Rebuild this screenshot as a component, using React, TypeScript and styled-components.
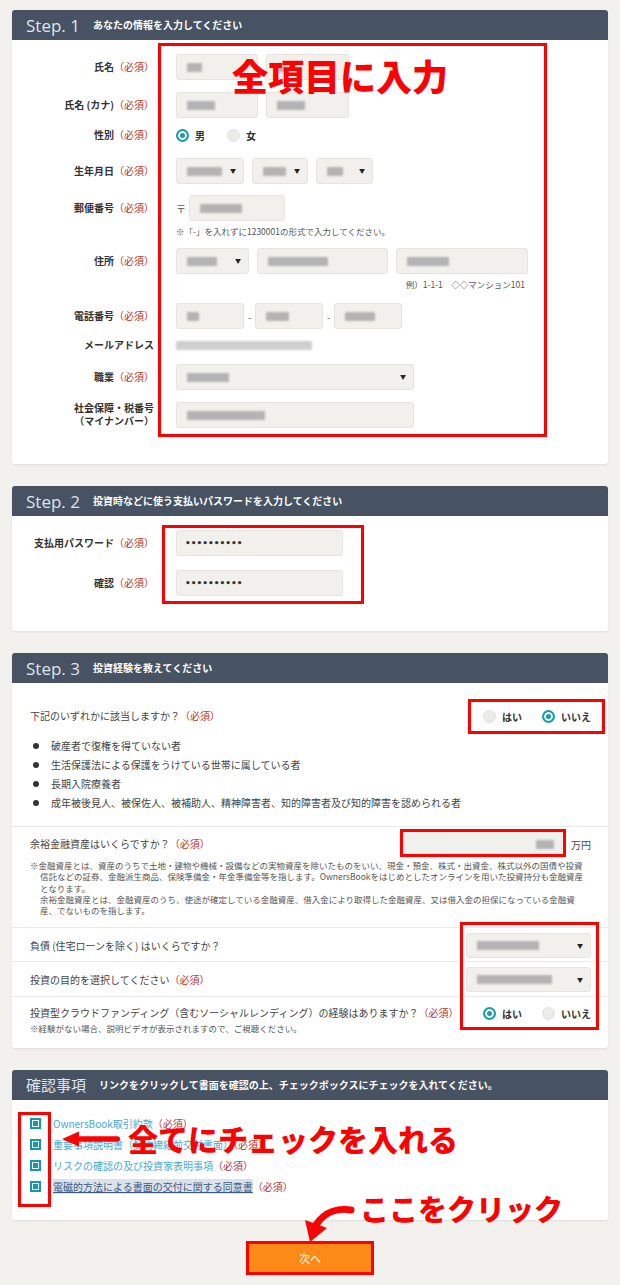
import React from 'react';
import styled, { createGlobalStyle } from 'styled-components';

const GlobalStyle = createGlobalStyle`
  html, body {
    margin: 0;
    padding: 0;
    background: #f2f1ed;
  }
  body {
    font-family: "Noto Sans CJK JP", "Noto Sans", sans-serif;
    color: #333;
  }
  * {
    box-sizing: border-box;
  }
`;

type BoxProps = { $x: number; $y: number; $w: number; $h: number };
type Field = { $gap?: number };

const Page = styled.div`
  position: relative;
  width: 620px;
  padding: 10px 12px 8px;
  display: flex;
  flex-direction: column;
  gap: 22px;
`;

const Card = styled.section`
  background: #fff;
  border-radius: 3px;
  box-shadow: 0 1px 2px rgba(0, 0, 0, 0.08);
`;

const CardHead = styled.header`
  height: 30px;
  background: #475263;
  border-radius: 3px 3px 0 0;
  display: flex;
  align-items: center;
  gap: 13px;
  padding: 0 14px;
`;

const StepNo = styled.span`
  font-family: "Open Sans", "Noto Sans CJK JP", sans-serif;
  font-size: 17px;
  color: #dfe5ec;
  line-height: 1;
`;

const HeadTitle = styled.span`
  font-size: 15px;
  color: #dfe5ec;
  line-height: 1;
`;

const HeadText = styled.span`
  font-size: 10px;
  font-weight: 700;
  color: #fff;
  line-height: 1;
`;

const FormBody = styled.div<{ $pt: number; $pb: number }>`
  padding: ${(p) => p.$pt}px 0 ${(p) => p.$pb}px;
  display: flex;
  flex-direction: column;
`;

const FieldRow = styled.div<Field>`
  display: flex;
  align-items: flex-start;
  margin-top: ${(p) => p.$gap ?? 0}px;
`;

const Label = styled.div<{ $h: number }>`
  width: 142px;
  height: ${(p) => p.$h}px;
  margin-right: 22px;
  flex-shrink: 0;
  display: flex;
  align-items: center;
  justify-content: flex-end;
  text-align: right;
  font-size: 10px;
  font-weight: 700;
  line-height: 13px;
  color: #333;
  padding-bottom: 2px;
`;

const Req = styled.span`
  color: #b8322c;
  font-weight: 400;
`;

const Content = styled.div`
  display: flex;
  flex-direction: column;
`;

const Controls = styled.div<{ $h: number; $gap?: number }>`
  display: flex;
  align-items: center;
  gap: ${(p) => p.$gap ?? 8}px;
  height: ${(p) => p.$h}px;
  font-size: 10px;
  font-weight: 700;
`;

const Input = styled.div<{ $w: number; $h?: number; $end?: boolean }>`
  width: ${(p) => p.$w}px;
  height: ${(p) => p.$h ?? 26}px;
  background: #f1f0ec;
  border: 1px solid #e6e4df;
  border-radius: 3px;
  display: flex;
  align-items: center;
  justify-content: ${(p) => (p.$end ? 'flex-end' : 'space-between')};
  padding: 0 7px 0 10px;
  flex-shrink: 0;
`;

const Blur = styled.span<{ $w: number; $light?: boolean }>`
  display: block;
  width: ${(p) => p.$w}px;
  height: 9px;
  background: ${(p) => (p.$light ? '#cfcfcf' : '#b3b3b3')};
  filter: blur(1.2px);
  border-radius: 1px;
`;

const Arrow = styled.span`
  font-size: 6px;
  color: #222;
  line-height: 1;
`;

const Dots = styled.span`
  font-family: "DejaVu Sans", sans-serif;
  font-size: 9px;
  color: #333;
  margin-left: -2px;
`;

const Dash = styled.span`
  width: 3px;
  text-align: center;
  font-weight: 400;
  color: #666;
`;

const PostMark = styled.span`
  width: 9px;
  font-weight: 400;
  color: #555;
`;

const Note = styled.div<{ $right?: boolean }>`
  font-size: 8.5px;
  line-height: 12px;
  color: #555;
  margin-top: 4px;
  text-align: ${(p) => (p.$right ? 'right' : 'left')};
  padding-right: ${(p) => (p.$right ? 3 : 0)}px;
`;

const Radio = styled.span<{ $on?: boolean }>`
  width: 13px;
  height: 13px;
  border-radius: 50%;
  flex-shrink: 0;
  background: ${(p) => (p.$on ? '#1a9cb0' : '#ebebe8')};
  border: ${(p) => (p.$on ? '2px solid #1a9cb0' : '1px solid #e3e3df')};
  box-shadow: ${(p) => (p.$on ? 'inset 0 0 0 2px #fff' : 'none')};
`;

const RadioGroup = styled.div<{ $gap: number }>`
  display: flex;
  align-items: center;
  gap: ${(p) => p.$gap}px;
  height: 14px;
  font-size: 10px;
  font-weight: 700;
  color: #333;
`;

const RadioItem = styled.label`
  display: flex;
  align-items: center;
  gap: 6px;
`;

const Section = styled.div<{ $pt: number; $pb: number; $line?: boolean }>`
  padding: ${(p) => p.$pt}px 17px ${(p) => p.$pb}px 18px;
  border-top: ${(p) => (p.$line ? '1px solid #ebeae7' : 'none')};
`;

const QRow = styled.div`
  display: flex;
  align-items: center;
  justify-content: space-between;
`;

const QText = styled.div`
  font-size: 10px;
  line-height: 14px;
  color: #444;
`;

const Bullets = styled.ul`
  list-style: none;
  margin: 13px 0 0;
  padding: 0;
`;

const Bullet = styled.li`
  display: flex;
  align-items: center;
  height: 19px;
  padding-left: 3px;
  font-size: 10px;
  color: #444;
  &::before {
    content: '';
    width: 6px;
    height: 6px;
    border-radius: 50%;
    background: #333;
    margin-right: 12px;
  }
`;

const Money = styled.div`
  display: flex;
  align-items: center;
  gap: 9px;
  font-size: 10px;
  color: #444;
`;

const SmallNote = styled.div<{ $mt: number }>`
  margin-top: ${(p) => p.$mt}px;
  font-size: 8.5px;
  line-height: 11.3px;
  color: #555;
  padding-left: 10px;
  text-indent: -10px;
  white-space: nowrap;
`;

const CheckList = styled.div`
  padding: 17px 18px 26px;
  display: flex;
  flex-direction: column;
  gap: 7px;
`;

const CheckRow = styled.div`
  display: flex;
  align-items: center;
  gap: 12px;
  height: 14px;
  font-size: 10px;
`;

const Check = styled.span`
  width: 11px;
  height: 11px;
  flex-shrink: 0;
  border: 2px solid #1797ad;
  background: #1797ad;
  box-shadow: inset 0 0 0 1px #fff;
`;

const DocLink = styled.a<{ $focus?: boolean }>`
  color: ${(p) => (p.$focus ? '#3b5a82' : '#46a9d6')};
  text-decoration: ${(p) => (p.$focus ? 'underline' : 'none')};
  background: ${(p) => (p.$focus ? '#dde2ea' : 'transparent')};
`;

const NextButton = styled.button`
  align-self: center;
  margin-top: -1px;
  width: 128px;
  height: 34px;
  background: #fb8b16;
  border: 3px solid #ff0000;
  color: #fff;
  font-family: "Noto Sans CJK JP", sans-serif;
  font-size: 11px;
  display: flex;
  align-items: center;
  justify-content: center;
`;

const RedBox = styled.div<BoxProps>`
  position: absolute;
  left: ${(p) => p.$x}px;
  top: ${(p) => p.$y}px;
  width: ${(p) => p.$w}px;
  height: ${(p) => p.$h}px;
  border: 3px solid #ff0000;
  pointer-events: none;
`;

const Callout = styled.div<{ $x: number; $y: number; $size: number }>`
  position: absolute;
  left: ${(p) => p.$x}px;
  top: ${(p) => p.$y}px;
  font-size: ${(p) => p.$size}px;
  line-height: 1;
  font-weight: 900;
  color: #ff0000;
  white-space: nowrap;
  pointer-events: none;
`;

const ArrowSvg = styled.svg<{ $x: number; $y: number }>`
  position: absolute;
  left: ${(p) => p.$x}px;
  top: ${(p) => p.$y}px;
  overflow: visible;
`;

const Select = ({ w, blur, h }: { w: number; blur: number; h?: number }) => (
  <Input $w={w} $h={h}>
    <Blur $w={blur} />
    <Arrow>▼</Arrow>
  </Input>
);

const App = () => {
  return (
    <>
      <GlobalStyle />
      <Page>
        <Card>
          <CardHead>
            <StepNo>Step. 1</StepNo>
            <HeadText>あなたの情報を入力してください</HeadText>
          </CardHead>
          <FormBody $pt={14} $pb={36}>
            <FieldRow>
              <Label $h={26}>
                氏名<Req>（必須）</Req>
              </Label>
              <Controls $h={26}>
                <Input $w={82}><Blur $w={15} /></Input>
                <Input $w={83}><Blur $w={9} /></Input>
              </Controls>
            </FieldRow>
            <FieldRow $gap={12}>
              <Label $h={26}>
                氏名 (カナ)<Req>（必須）</Req>
              </Label>
              <Controls $h={26}>
                <Input $w={82}><Blur $w={28} /></Input>
                <Input $w={83}><Blur $w={28} /></Input>
              </Controls>
            </FieldRow>
            <FieldRow $gap={10}>
              <Label $h={14}>
                性別<Req>（必須）</Req>
              </Label>
              <RadioGroup $gap={22}>
                <RadioItem><Radio $on />男</RadioItem>
                <RadioItem><Radio />女</RadioItem>
              </RadioGroup>
            </FieldRow>
            <FieldRow $gap={16}>
              <Label $h={26}>
                生年月日<Req>（必須）</Req>
              </Label>
              <Controls $h={26}>
                <Select w={68} blur={35} />
                <Select w={56} blur={23} />
                <Select w={57} blur={16} />
              </Controls>
            </FieldRow>
            <FieldRow $gap={11}>
              <Label $h={26}>
                郵便番号<Req>（必須）</Req>
              </Label>
              <Content>
                <Controls $h={26} $gap={4}>
                  <PostMark>〒</PostMark>
                  <Input $w={96}><Blur $w={42} /></Input>
                </Controls>
                <Note>※「-」を入れずに1230001の形式で入力してください。</Note>
              </Content>
            </FieldRow>
            <FieldRow $gap={11}>
              <Label $h={26}>
                住所<Req>（必須）</Req>
              </Label>
              <Content>
                <Controls $h={26}>
                  <Select w={73} blur={30} />
                  <Input $w={131}><Blur $w={60} /></Input>
                  <Input $w={132}><Blur $w={42} /></Input>
                </Controls>
                <Note $right>例）1-1-1　◇◇マンション101</Note>
              </Content>
            </FieldRow>
            <FieldRow $gap={13}>
              <Label $h={26}>
                電話番号<Req>（必須）</Req>
              </Label>
              <Controls $h={26} $gap={4}>
                <Input $w={68}><Blur $w={12} /></Input>
                <Dash>-</Dash>
                <Input $w={68}><Blur $w={23} /></Input>
                <Dash>-</Dash>
                <Input $w={68}><Blur $w={30} /></Input>
              </Controls>
            </FieldRow>
            <FieldRow $gap={9}>
              <Label $h={14}>メールアドレス</Label>
              <Controls $h={14}>
                <Blur $w={136} $light />
              </Controls>
            </FieldRow>
            <FieldRow $gap={12}>
              <Label $h={26}>
                職業<Req>（必須）</Req>
              </Label>
              <Controls $h={26}>
                <Select w={238} blur={42} />
              </Controls>
            </FieldRow>
            <FieldRow $gap={12}>
              <Label $h={26}>
                社会保障・税番号
                <br />
                （マイナンバー）
              </Label>
              <Controls $h={26}>
                <Input $w={238}><Blur $w={78} /></Input>
              </Controls>
            </FieldRow>
          </FormBody>
        </Card>

        <Card>
          <CardHead>
            <StepNo>Step. 2</StepNo>
            <HeadText>投資時などに使う支払いパスワードを入力してください</HeadText>
          </CardHead>
          <FormBody $pt={14} $pb={35}>
            <FieldRow>
              <Label $h={26}>
                支払用パスワード<Req>（必須）</Req>
              </Label>
              <Controls $h={26}>
                <Input $w={167}><Dots>••••••••••</Dots></Input>
              </Controls>
            </FieldRow>
            <FieldRow $gap={14}>
              <Label $h={26}>
                確認<Req>（必須）</Req>
              </Label>
              <Controls $h={26}>
                <Input $w={167}><Dots>••••••••••</Dots></Input>
              </Controls>
            </FieldRow>
          </FormBody>
        </Card>

        <Card>
          <CardHead>
            <StepNo>Step. 3</StepNo>
            <HeadText>投資経験を教えてください</HeadText>
          </CardHead>
          <Section $pt={26} $pb={14}>
            <QRow>
              <QText>
                下記のいずれかに該当しますか？<Req>（必須）</Req>
              </QText>
              <RadioGroup $gap={20}>
                <RadioItem><Radio />はい</RadioItem>
                <RadioItem><Radio $on />いいえ</RadioItem>
              </RadioGroup>
            </QRow>
            <Bullets>
              <Bullet>破産者で復権を得ていない者</Bullet>
              <Bullet>生活保護法による保護をうけている世帯に属している者</Bullet>
              <Bullet>長期入院療養者</Bullet>
              <Bullet>成年被後見人、被保佐人、被補助人、精神障害者、知的障害者及び知的障害を認められる者</Bullet>
            </Bullets>
          </Section>
          <Section $pt={4} $pb={11} $line>
            <QRow>
              <QText>
                余裕金融資産はいくらですか？<Req>（必須）</Req>
              </QText>
              <Money>
                <Input $w={162} $end><Blur $w={18} /></Input>
                万円
              </Money>
            </QRow>
            <SmallNote $mt={3}>
              ※金融資産とは、資産のうちで土地・建物や機械・設備などの実物資産を除いたものをいい、現金・預金、株式・出資金、株式以外の国債や投資
              <br />
              信託などの証券、金融派生商品、保険準備金・年金準備金等を指します。OwnersBookをはじめとしたオンラインを用いた投資持分も金融資産
              <br />
              となります。
              <br />
              余裕金融資産とは、金融資産のうち、使途が確定している金融資産、借入金により取得した金融資産、又は借入金の担保になっている金融資
              <br />
              産、でないものを指します。
            </SmallNote>
          </Section>
          <Section $pt={5} $pb={3} $line>
            <QRow>
              <QText>負債 (住宅ローンを除く) はいくらですか？</QText>
              <Select w={125} blur={62} h={25} />
            </QRow>
          </Section>
          <Section $pt={5} $pb={4} $line>
            <QRow>
              <QText>
                投資の目的を選択してください<Req>（必須）</Req>
              </QText>
              <Select w={125} blur={75} h={25} />
            </QRow>
          </Section>
          <Section $pt={9} $pb={13} $line>
            <QRow>
              <QText>
                投資型クラウドファンディング（含むソーシャルレンディング）の経験はありますか？<Req>（必須）</Req>
              </QText>
              <RadioGroup $gap={20}>
                <RadioItem><Radio $on />はい</RadioItem>
                <RadioItem><Radio />いいえ</RadioItem>
              </RadioGroup>
            </QRow>
            <SmallNote $mt={3}>※経験がない場合、説明ビデオが表示されますので、ご視聴ください。</SmallNote>
          </Section>
        </Card>

        <Card>
          <CardHead>
            <HeadTitle>確認事項</HeadTitle>
            <HeadText>リンクをクリックして書面を確認の上、チェックボックスにチェックを入れてください。</HeadText>
          </CardHead>
          <CheckList>
            <CheckRow>
              <Check />
              <span>
                <DocLink>OwnersBook取引約款</DocLink>
                <Req>（必須）</Req>
              </span>
            </CheckRow>
            <CheckRow>
              <Check />
              <span>
                <DocLink>重要事項説明書（契約締結前交付書面）</DocLink>
                <Req>（必須）</Req>
              </span>
            </CheckRow>
            <CheckRow>
              <Check />
              <span>
                <DocLink>リスクの確認の及び投資家表明事項</DocLink>
                <Req>（必須）</Req>
              </span>
            </CheckRow>
            <CheckRow>
              <Check />
              <span>
                <DocLink $focus>電磁的方法による書面の交付に関する同意書</DocLink>
                <Req>（必須）</Req>
              </span>
            </CheckRow>
          </CheckList>
        </Card>

        <NextButton>次へ</NextButton>

        <RedBox $x={158} $y={43} $w={389} $h={394} />
        <RedBox $x={162} $y={525} $w={202} $h={79} />
        <RedBox $x={468} $y={699} $w={137} $h={35} />
        <RedBox $x={400} $y={829} $w={166} $h={28} />
        <RedBox $x={460} $y={922} $w={139} $h={108} />
        <RedBox $x={18} $y={1112} $w={33} $h={95} />

        <Callout $x={232} $y={57} $size={36}>全項目に入力</Callout>
        <Callout $x={128} $y={1123} $size={30}>全てにチェックを入れる</Callout>
        <Callout $x={360} $y={1194} $size={29}>ここをクリック</Callout>

        <ArrowSvg $x={60} $y={1130} width={62} height={18} viewBox="0 0 62 18">
          <polygon points="2,9 19,1.5 19,16.5" fill="#ff0000" />
          <rect x="17" y="6.3" width="43" height="5.5" rx="2.7" fill="#ff0000" />
        </ArrowSvg>
        <ArrowSvg $x={295} $y={1200} width={65} height={45} viewBox="0 0 65 45">
          <path d="M56 10 C44 8 30 11 21 25" stroke="#ff0000" strokeWidth="7" fill="none" strokeLinecap="round" />
          <polygon points="10,20 32,28 15,42" fill="#ff0000" />
        </ArrowSvg>
      </Page>
    </>
  );
};

export default App;
